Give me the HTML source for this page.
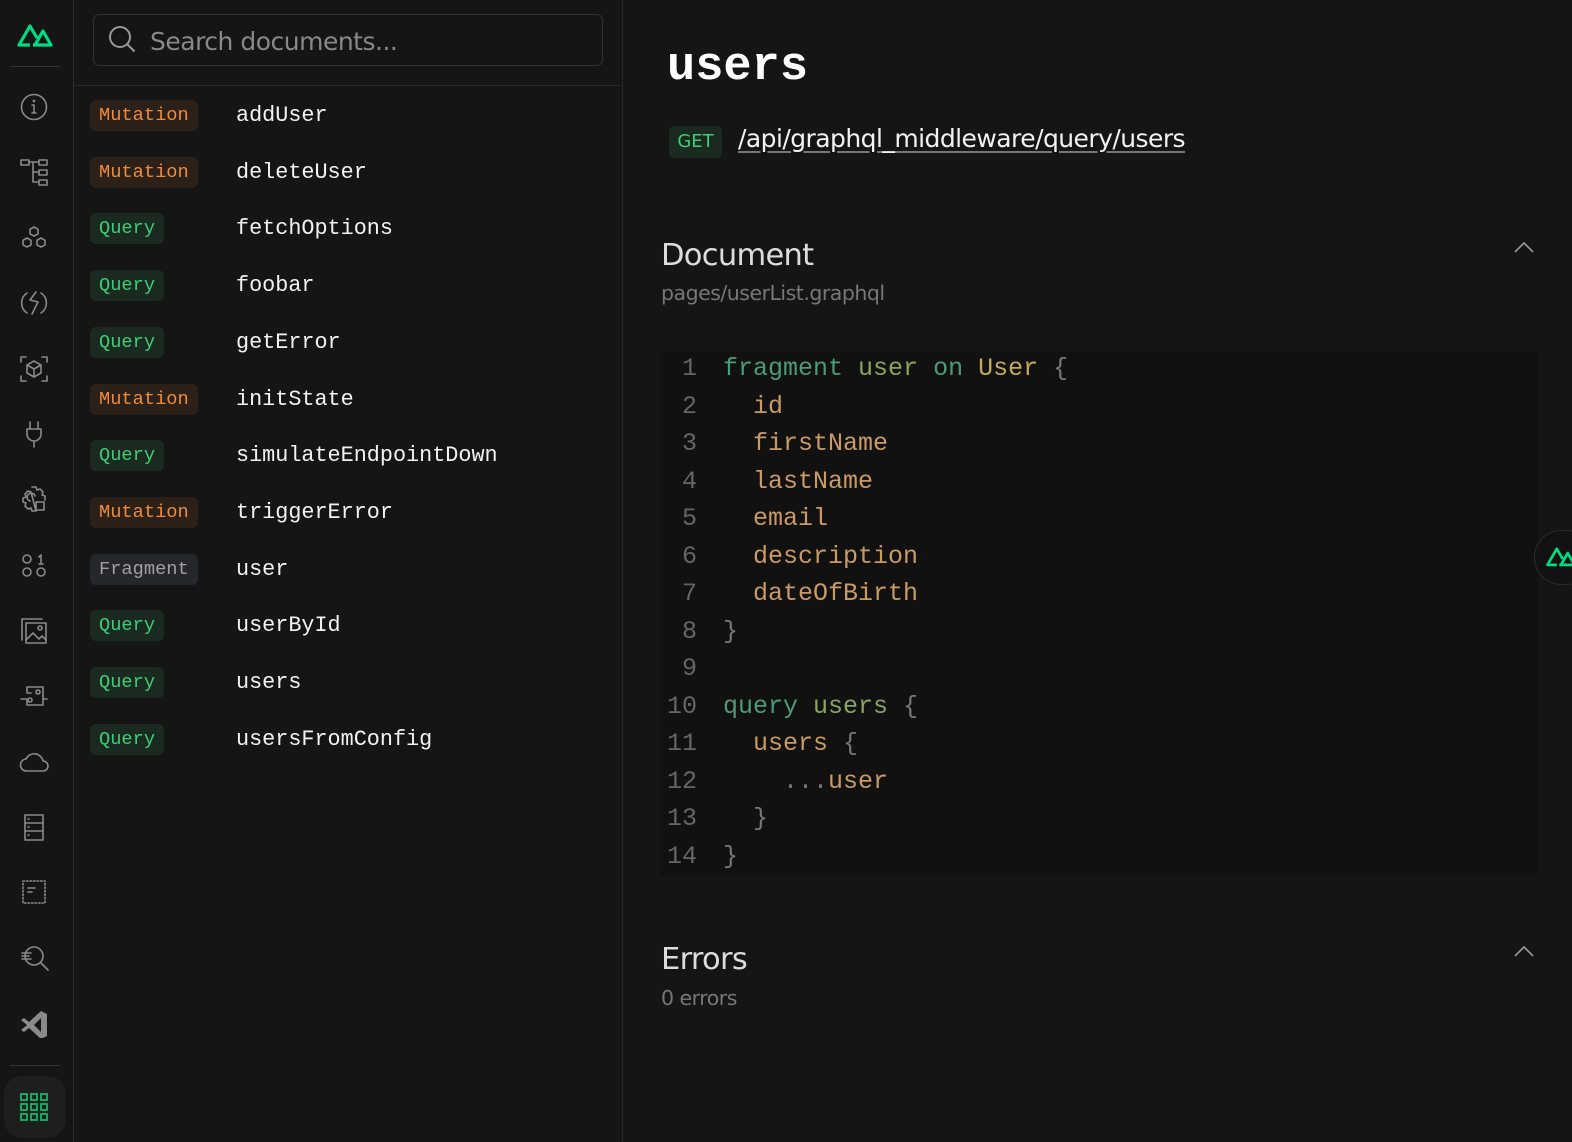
<!DOCTYPE html>
<html><head><meta charset="utf-8"><style>
*{box-sizing:border-box;margin:0;padding:0}
body{width:1572px;height:1142px;background:#151515;font-family:"Liberation Sans",sans-serif;position:relative;overflow:hidden;color:#ddd}
.side{position:absolute;left:0;top:0;width:74px;height:1142px;border-right:1px solid #2a2a2a}
.ic{position:absolute;left:19px;width:30px;height:30px}
.ic svg{width:30px;height:30px;fill:none;stroke:#8a8a8a;stroke-width:1.6;stroke-linecap:round;stroke-linejoin:round}
.hr{position:absolute;left:10px;width:50px;height:1px;background:#333}
.list{position:absolute;left:74px;top:0;width:549px;height:1142px;border-right:1px solid #262626}
.search{position:absolute;left:19px;top:14px;width:510px;height:52px;border:1px solid #333;border-radius:6px}
.search span{position:absolute;left:56px;top:12px;font-size:25px;color:#888;font-family:"DejaVu Sans","Liberation Sans",sans-serif;letter-spacing:-.5px}
.sep{position:absolute;left:0;top:85px;width:549px;height:1px;background:#262a30}
.row{position:absolute;left:16px;height:31px}
.b{position:absolute;left:0;top:0;height:31px;border-radius:6px;font:18.7px "Liberation Mono",monospace;line-height:31px;padding:0 9px}
.m{background:#2b2119;color:#f08a3c;width:108px}
.q{background:#1b2a21;color:#3ecf75;width:74px}
.f{background:#26272b;color:#a0a0a8;width:108px}
.n{position:absolute;left:146px;top:0;font:21.8px "Liberation Mono",monospace;line-height:31px;color:#f2f2f2}
.code{position:absolute;left:660px;top:351px;width:878px;height:525px;background:#111;font:25px "Liberation Mono",monospace}
.ln{position:absolute;left:0;width:37px;text-align:right;color:#666}
.cl{position:absolute;left:63px;white-space:pre}
.k{color:#4d9a78}.u{color:#8aa55c}.t{color:#c7a85e}.p{color:#777}.fd{color:#c99a66}
</style></head><body>
<div class="side">
<svg style="position:absolute;left:16px;top:21px" width="38" height="27" viewBox="0 0 38 27"><path d="M14 24H3L14 5l7 12M17 24h18L27 10l-8 14" fill="none" stroke="#00dc82" stroke-width="3.2" stroke-linejoin="round"/></svg>
<div class="hr" style="top:66px"></div>
<div class="ic" style="top:92px"><svg viewBox="0 0 30 30"><circle cx="15" cy="15" r="12.5"/><path d="M15 13v8M13 21h4M13 13h2"/><circle cx="15" cy="9" r=".6"/></svg></div>
<div class="ic" style="top:157px"><svg viewBox="0 0 30 30"><rect x="2" y="3" width="8" height="5"/><rect x="20" y="3" width="8" height="5"/><rect x="20" y="13" width="8" height="5"/><rect x="20" y="23" width="8" height="5"/><path d="M10 5h10M14 5v20h6M14 15h6"/></svg></div>
<div class="ic" style="top:223px"><svg viewBox="0 0 30 30"><path d="M15 4l4 2.3v4.6L15 13l-4-2.1V6.3zM8 15l4 2.3v4.6L8 24l-4-2.1v-4.6zM22 15l4 2.3v4.6L22 24l-4-2.1v-4.6z"/></svg></div>
<div class="ic" style="top:288px"><svg viewBox="0 0 30 30"><path d="M8 5a12 12 0 0 0 0 20M22 5a12 12 0 0 1 0 20M17 4l-6 8 8 2-6 12"/></svg></div>
<div class="ic" style="top:354px"><svg viewBox="0 0 30 30"><path d="M2 8V3h5M23 3h5v5M28 22v5h-5M7 27H2v-5M15 7l7 4v8l-7 4-7-4v-8zM8 11l7 4 7-4M15 15v8"/></svg></div>
<div class="ic" style="top:419px"><svg viewBox="0 0 30 30"><path d="M11 3v7M19 3v7M8 10h14v5a7 7 0 0 1-14 0zM15 22v6"/></svg></div>
<div class="ic" style="top:484px"><svg viewBox="0 0 30 30"><path d="M13 3h4l1 3 3-1 3 3-1 3 3 1v4M17 27h-4l-1-3-3 1-3-3 1-3-3-1v-4l3-1-1-3 3-3 3 1zM11 17a4 4 0 1 1 5-5"/><rect x="17" y="18" width="8" height="8"/></svg></div>
<div class="ic" style="top:550px"><svg viewBox="0 0 30 30"><circle cx="8" cy="9" r="4"/><circle cx="8" cy="22" r="4"/><circle cx="22" cy="22" r="4"/><path d="M20 7l2-2v9M20 14h4"/></svg></div>
<div class="ic" style="top:616px"><svg viewBox="0 0 30 30"><path d="M3 24V3h20"/><rect x="7" y="7" width="20" height="20"/><circle cx="21" cy="12" r="2"/><path d="M7 24l7-7 6 6 3-3 4 4"/></svg></div>
<div class="ic" style="top:681px"><svg viewBox="0 0 30 30"><path d="M8 12V6h16v12h4M24 18v6H8v-6H2M8 12h4"/><circle cx="19" cy="11" r="2"/><circle cx="11" cy="19" r="2"/></svg></div>
<div class="ic" style="top:747px"><svg viewBox="0 0 30 30"><path d="M8 24a6 6 0 0 1-1-12 9 9 0 0 1 17 2 5 5 0 0 1 0 10z"/></svg></div>
<div class="ic" style="top:812px"><svg viewBox="0 0 30 30"><rect x="6" y="3" width="18" height="25"/><path d="M6 11h18M6 19h18M9 7h1M9 15h1M9 23h1"/></svg></div>
<div class="ic" style="top:877px"><svg viewBox="0 0 30 30"><rect x="4" y="4" width="22" height="22" stroke-dasharray="1.5 2"/><path d="M9 11h7M9 15h4"/></svg></div>
<div class="ic" style="top:943px"><svg viewBox="0 0 30 30"><circle cx="15" cy="13" r="9"/><path d="M22 20l7 7M3 10h9M3 13h7M3 16h9"/></svg></div>
<div class="ic" style="top:1008px"><svg viewBox="0 0 30 30"><path d="M22 3L10 14 5 10 2 12l6 5-6 5 3 2 5-4 12 11 6-3V6z" fill="#8a8a8a" stroke="none"/><path d="M22 10v14l-7-7z" fill="#151515" stroke="none"/></svg></div>
<div class="hr" style="top:1065px"></div>
<div style="position:absolute;left:4px;top:1076px;width:62px;height:62px;border-radius:18px;background:#1e1e1e"></div>
<svg style="position:absolute;left:20px;top:1093px" width="28" height="28" viewBox="0 0 28 28" fill="none" stroke="#10b86a" stroke-width="1.8"><rect x="1" y="1" width="6" height="6"/><rect x="11" y="1" width="6" height="6"/><rect x="21" y="1" width="6" height="6"/><rect x="1" y="11" width="6" height="6"/><rect x="11" y="11" width="6" height="6"/><rect x="21" y="11" width="6" height="6"/><rect x="1" y="21" width="6" height="6"/><rect x="11" y="21" width="6" height="6"/><rect x="21" y="21" width="6" height="6"/></svg>
</div>
<div class="list">
<div class="search"><svg style="position:absolute;left:14px;top:10px" width="30" height="30" viewBox="0 0 30 30" fill="none" stroke="#999" stroke-width="2"><circle cx="12" cy="12" r="10"/><path d="M19.5 19.5l7 7"/></svg><span>Search documents...</span></div>
<div class="sep"></div>
<div class="row" style="top:100px"><div class="b m">Mutation</div><div class="n">addUser</div></div>
<div class="row" style="top:157px"><div class="b m">Mutation</div><div class="n">deleteUser</div></div>
<div class="row" style="top:213px"><div class="b q">Query</div><div class="n">fetchOptions</div></div>
<div class="row" style="top:270px"><div class="b q">Query</div><div class="n">foobar</div></div>
<div class="row" style="top:327px"><div class="b q">Query</div><div class="n">getError</div></div>
<div class="row" style="top:384px"><div class="b m">Mutation</div><div class="n">initState</div></div>
<div class="row" style="top:440px"><div class="b q">Query</div><div class="n">simulateEndpointDown</div></div>
<div class="row" style="top:497px"><div class="b m">Mutation</div><div class="n">triggerError</div></div>
<div class="row" style="top:554px"><div class="b f">Fragment</div><div class="n">user</div></div>
<div class="row" style="top:610px"><div class="b q">Query</div><div class="n">userById</div></div>
<div class="row" style="top:667px"><div class="b q">Query</div><div class="n">users</div></div>
<div class="row" style="top:724px"><div class="b q">Query</div><div class="n">usersFromConfig</div></div>
</div>
<div style="position:absolute;left:667px;top:41px;font:bold 47px 'Liberation Mono',monospace;color:#fff">users</div>
<div style="position:absolute;left:669px;top:126px;width:53px;height:32px;border-radius:5px;background:#1b2a21;color:#3ecf75;font:18px 'DejaVu Sans',sans-serif;line-height:32px;text-align:center">GET</div>
<div style="position:absolute;left:738px;top:124px;font:25px 'DejaVu Sans',sans-serif;letter-spacing:-.55px;color:#f2f2f2;text-decoration:underline;text-decoration-color:#777;text-underline-offset:4px">/api/graphql_middleware/query/users</div>
<div style="position:absolute;left:661px;top:238px;font:30.5px 'DejaVu Sans',sans-serif;letter-spacing:-.7px;color:#ddd">Document</div>
<div style="position:absolute;left:661px;top:281px;font:20.5px 'DejaVu Sans',sans-serif;letter-spacing:-.5px;color:#777">pages/userList.graphql</div>
<svg style="position:absolute;left:1513px;top:240px" width="22" height="14" viewBox="0 0 22 14" fill="none" stroke="#999" stroke-width="1.6"><path d="M2 12l9-9 9 9"/></svg>
<div class="code">
<div class="ln" style="top:3px">1</div><div class="cl" style="top:3px"><span class="k">fragment</span> <span class="u">user</span> <span class="k">on</span> <span class="t">User</span> <span class="p">{</span></div>
<div class="ln" style="top:41px">2</div><div class="cl fd" style="top:41px">  id</div>
<div class="ln" style="top:78px">3</div><div class="cl fd" style="top:78px">  firstName</div>
<div class="ln" style="top:116px">4</div><div class="cl fd" style="top:116px">  lastName</div>
<div class="ln" style="top:153px">5</div><div class="cl fd" style="top:153px">  email</div>
<div class="ln" style="top:191px">6</div><div class="cl fd" style="top:191px">  description</div>
<div class="ln" style="top:228px">7</div><div class="cl fd" style="top:228px">  dateOfBirth</div>
<div class="ln" style="top:266px">8</div><div class="cl p" style="top:266px">}</div>
<div class="ln" style="top:303px">9</div>
<div class="ln" style="top:341px">10</div><div class="cl" style="top:341px"><span class="k">query</span> <span class="u">users</span> <span class="p">{</span></div>
<div class="ln" style="top:378px">11</div><div class="cl" style="top:378px">  <span class="fd">users</span> <span class="p">{</span></div>
<div class="ln" style="top:416px">12</div><div class="cl" style="top:416px">    <span class="p">...</span><span class="fd">user</span></div>
<div class="ln" style="top:453px">13</div><div class="cl p" style="top:453px">  }</div>
<div class="ln" style="top:491px">14</div><div class="cl p" style="top:491px">}</div>
</div>
<div style="position:absolute;left:661px;top:942px;font:30.5px 'DejaVu Sans',sans-serif;letter-spacing:-.7px;color:#ddd">Errors</div>
<div style="position:absolute;left:661px;top:986px;font:20.5px 'DejaVu Sans',sans-serif;letter-spacing:-.5px;color:#777">0 errors</div>
<svg style="position:absolute;left:1513px;top:944px" width="22" height="14" viewBox="0 0 22 14" fill="none" stroke="#999" stroke-width="1.6"><path d="M2 12l9-9 9 9"/></svg>
<div style="position:absolute;left:1534px;top:530px;width:60px;height:55px;border-radius:28px;background:#121212;border:1px solid #2a2a2a;overflow:hidden"><svg style="position:absolute;left:10px;top:13px" width="32" height="24" viewBox="0 0 38 27"><path d="M14 24H3L14 5l7 12M17 24h18L27 10l-8 14" fill="none" stroke="#00dc82" stroke-width="3.2" stroke-linejoin="round"/></svg></div>
</body></html>
